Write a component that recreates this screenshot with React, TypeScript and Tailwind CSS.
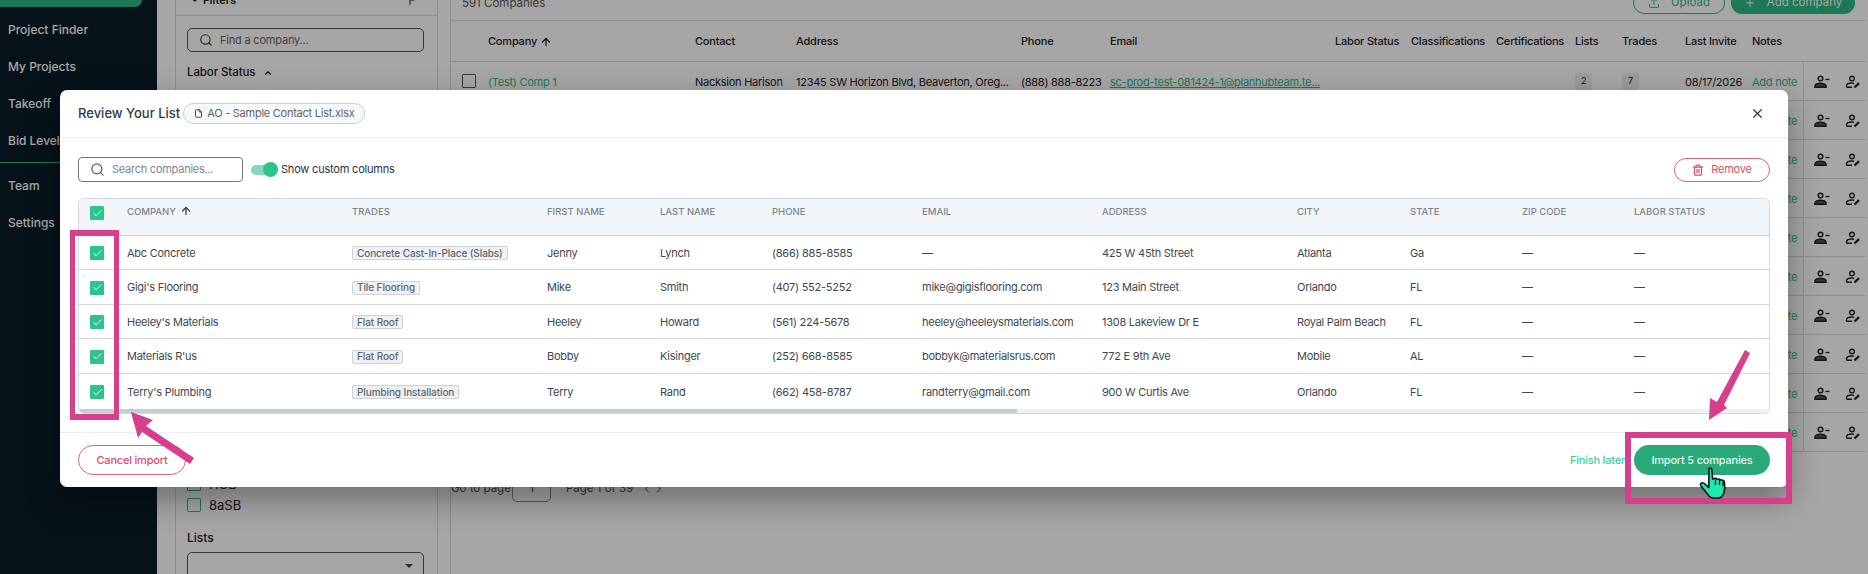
import React from 'react';
import { ArrowUp, Check, ChevronLeft, ChevronRight, ChevronUp, File, Plus, Search, Trash2, Upload, X } from 'lucide-react';

const navItems = ['Project Finder', 'My Projects', 'Takeoff', 'Bid Leveling'];

const bgCols = 'grid grid-cols-[37px_207px_101px_225px_89px_225px_76px_85px_79px_47px_63px_67px_51px_1fr]';
const bgHead = ['', 'Company', 'Contact', 'Address', 'Phone', 'Email', 'Labor Status', 'Classifications', 'Certifications', 'Lists', 'Trades', 'Last Invite', 'Notes'];

const cols = 'grid grid-cols-[48px_225px_195px_113px_112px_150px_180px_195px_113px_112px_112px_1fr]';
const heads = ['Trades', 'First Name', 'Last Name', 'Phone', 'Email', 'Address', 'City', 'State', 'Zip Code', 'Labor Status'];

const rows = [
  { h: 'h-[34px]', company: 'Abc Concrete', trade: 'Concrete Cast-In-Place (Slabs)', first: 'Jenny', last: 'Lynch', phone: '(866) 885-8585', email: '—', address: '425 W 45th Street', city: 'Atlanta', state: 'Ga' },
  { h: 'h-[35px]', company: "Gigi's Flooring", trade: 'Tile Flooring', first: 'Mike', last: 'Smith', phone: '(407) 552-5252', email: 'mike@gigisflooring.com', address: '123 Main Street', city: 'Orlando', state: 'FL' },
  { h: 'h-[34px]', company: "Heeley's Materials", trade: 'Flat Roof', first: 'Heeley', last: 'Howard', phone: '(561) 224-5678', email: 'heeley@heeleysmaterials.com', address: '1308 Lakeview Dr E', city: 'Royal Palm Beach', state: 'FL' },
  { h: 'h-[35px]', company: "Materials R'us", trade: 'Flat Roof', first: 'Bobby', last: 'Kisinger', phone: '(252) 668-8585', email: 'bobbyk@materialsrus.com', address: '772 E 9th Ave', city: 'Mobile', state: 'AL' },
  { h: 'h-[35px]', company: "Terry's Plumbing", trade: 'Plumbing Installation', first: 'Terry', last: 'Rand', phone: '(662) 458-8787', email: 'randterry@gmail.com', address: '900 W Curtis Ave', city: 'Orlando', state: 'FL' },
];

const CheckBox = () => (
  <div className="w-[14px] h-[14px] rounded-[1px] bg-[#2cc48c] flex items-center justify-center">
    <Check className="w-[11px] h-[11px] text-white" strokeWidth={2} />
  </div>
);

const PersonMinus = () => (
  <svg width="16" height="14" viewBox="0 0 16 14" fill="none" stroke="#222222" className="shrink-0">
    <circle cx="6.5" cy="3.5" r="2.3" strokeWidth="1.5" />
    <path d="M1 12.2v-1c0-1.8 2.8-3 5.5-3s5.5 1.2 5.5 3v1Z" strokeWidth="1.6" fill="#555555" />
    <path d="M11.5 4.5h4" strokeWidth="1.3" />
  </svg>
);

const PersonPen = () => (
  <svg width="16" height="14" viewBox="0 0 16 14" fill="none" stroke="#222222" className="shrink-0">
    <circle cx="7" cy="3.5" r="2.3" strokeWidth="1.4" />
    <path d="M1.5 12.3v-1.2c0-1.8 2.6-3 5.5-3 .8 0 1.500.1 2.200.3M1.500 12.300h5.500" strokeWidth="1.5" />
    <path d="M9.500 12.500l4.500-4.300" strokeWidth="2.4" />
  </svg>
);

const Background = () => (
  <div className="flex h-[574px] bg-white text-[#222222]">
    <aside className="w-[157px] shrink-0 bg-[#0a1c28] text-white text-[12px] font-medium">
      <div className="w-[142px] h-[7px] bg-[#2fb985] rounded-br-[14px]" />
      <div className="pl-2 pt-[14px] flex flex-col gap-[20px]">
        {navItems.map(n => <div key={n} className="h-[17px] leading-[17px]">{n}</div>)}
      </div>
      <div className="h-px bg-[#2fb985] mt-[13px]" />
      <div className="pl-2 pt-[14px] flex flex-col gap-[20px]">
        <div className="h-[17px] leading-[17px]">Team</div>
        <div className="h-[17px] leading-[17px]">Settings</div>
      </div>
    </aside>

    <section className="w-[263px] ml-[18px] shrink-0 border-x border-[#dcdcdc] h-full">
      <div className="h-[16px] border-b border-[#dcdcdc] flex items-end justify-between pl-[16px] pr-[20px] overflow-hidden">
        <span className="text-[11px] font-semibold leading-[16px] translate-y-[-7px]">•&nbsp;&nbsp;Filters</span>
        <ChevronLeft className="w-3 h-3 translate-y-[-8px] rotate-45" />
      </div>
      <div className="pl-[11px] pr-[13px] pt-[12px]">
        <div className="h-[24px] border border-[#555555] rounded-[5px] flex items-center gap-[7px] pl-[11px] text-[11px] tracking-[-0.2px] text-[#666666]">
          <Search className="w-[14px] h-[14px] text-[#444444]" />
          Find a company...
        </div>
        <div className="mt-[12px] flex items-center gap-[8px] text-[11.5px] tracking-[-0.1px] font-medium">
          Labor Status
          <ChevronUp className="w-[10px] h-[10px]" strokeWidth={3} />
        </div>
        <div className="mt-[396px] flex items-center gap-[8px] text-[13px] h-[14px]">
          <div className="w-[14px] h-[14px] border border-[#2fb985] rounded-[1px]" />
          HUB
        </div>
        <div className="mt-[7px] flex items-center gap-[8px] text-[13px] h-[14px]">
          <div className="w-[14px] h-[14px] border border-[#2fb985] rounded-[1px]" />
          8aSB
        </div>
        <div className="mt-[18px] text-[12px] font-medium leading-[16px]">Lists</div>
        <div className="mt-[6px] h-[30px] border border-[#555555] rounded-[5px] flex items-center justify-end pr-[10px]">
          <svg width="8" height="4" viewBox="0 0 8 4" className="mt-[-2px]"><polygon points="0,0 8,0 4,4" fill="#444444" /></svg>
        </div>
      </div>
    </section>

    <section className="ml-[12px] flex-1 border-l border-[#dcdcdc] min-w-0">
      <div className="h-[20px] flex items-end justify-between pl-[11px] pr-[13px]">
        <span className="text-[11.5px] text-[#555555] leading-[14px] mb-[10px]">591 Companies</span>
        <div className="flex gap-[6px] h-[22px] mb-[6px]">
          <div className="w-[92px] h-[22px] border border-[#2fb985] rounded-full flex items-center justify-center gap-[11px] text-[11.5px] text-[#2fb985]">
            <Upload className="w-[12px] h-[12px]" /> Upload
          </div>
          <div className="w-[124px] h-[22px] bg-[#2fb985] rounded-full flex items-center justify-center gap-[11px] text-[11.5px] text-white">
            <Plus className="w-[12px] h-[12px]" /> Add company
          </div>
        </div>
      </div>
      <div className={`${bgCols} h-[42px] items-center border-y border-[#dcdcdc] text-[11px] tracking-[-0.2px] font-medium mr-[2px] pt-[1px]`}>
        {bgHead.map((h, i) => (
          <div key={i} className="flex items-center gap-[3px] whitespace-nowrap">
            {h}
            {h === 'Company' && <ArrowUp className="w-[12px] h-[12px]" strokeWidth={2.5} />}
          </div>
        ))}
      </div>
      {Array.from({ length: 10 }).map((_, i) => (
        <div key={i} className={`${bgCols} h-[39px] items-center border-b border-[#dcdcdc] text-[11px] tracking-[-0.25px] mr-[2px]`}>
          {i === 0 ? (
            <>
              <div className="pl-[11px]"><div className="w-[14px] h-[14px] border border-[#555555] rounded-[1px]" /></div>
              <div className="text-[#2fb985] pt-[3px]">(Test) Comp 1</div>
              <div className="whitespace-nowrap pt-[3px]">Nacksion Harison</div>
              <div className="whitespace-nowrap pt-[3px]">12345 SW Horizon Blvd, Beaverton, Oreg...</div>
              <div className="whitespace-nowrap pt-[3px]">(888) 888-8223</div>
              <div className="whitespace-nowrap text-[#2fb985] underline pt-[3px]">sc-prod-test-081424-1@planhubteam.te...</div>
              <div /><div /><div />
              <div><span className="inline-flex w-[17px] h-[17px] items-center justify-center rounded-[2px] bg-[#eeeeee] text-[9px]">2</span></div>
              <div><span className="inline-flex w-[17px] h-[17px] items-center justify-center rounded-[2px] bg-[#eeeeee] text-[9px]">7</span></div>
              <div className="whitespace-nowrap pt-[3px]">08/17/2026</div>
            </>
          ) : (
            <div className="col-span-12" />
          )}
          <div className="whitespace-nowrap text-[#2fb985] pt-[3px]">Add note</div>
          <div className="h-full border-l border-[#dcdcdc] flex items-center gap-[15px] pl-[10px] pt-[2px]">
            <PersonMinus />
            <PersonPen />
          </div>
        </div>
      ))}
      <div className="mt-[24px] flex items-center text-[11.5px] text-[#555555] h-[26px]">
        <span className="w-[61px] whitespace-nowrap">Go to page</span>
        <div className="w-[39px] h-[26px] border border-[#888888] rounded-[5px] flex items-center justify-center">1</div>
        <span className="ml-[15px] whitespace-nowrap">Page 1 of 39</span>
        <ChevronLeft className="w-3 h-3 ml-2" />
        <ChevronRight className="w-3 h-3" />
      </div>
    </section>
  </div>
);

const Modal = () => (
  <div className="absolute left-[60px] top-[90px] w-[1728px] h-[397px] bg-white rounded-[7px] shadow-[0_12px_32px_rgba(0,0,0,0.35)] flex flex-col">
    <div className="h-[48px] shrink-0 border-b border-[#eceef0] flex items-center pl-[18px] pr-[23px]">
      <span className="text-[13px] font-medium text-[#333b42]">Review Your List</span>
      <div className="ml-[3px] h-[21px] px-[10px] border border-[#c8ced4] bg-[#f7f9fa] rounded-full flex items-center gap-[4px] text-[11px] tracking-[-0.25px] text-[#5d6770]">
        <File className="w-[9px] h-[9px] text-[#333b42]" strokeWidth={2.5} />
        AO - Sample Contact List.xlsx
      </div>
      <X className="w-[15px] h-[15px] ml-auto text-[#333b42]" />
    </div>

    <div className="flex items-center h-[25px] mt-[19px] px-[18px] shrink-0">
      <div className="w-[165px] h-[25px] border border-[#70777d] rounded-[4px] flex items-center gap-[7px] pl-[11px] text-[11px] tracking-[-0.25px] text-[#7d868e]">
        <Search className="w-[15px] h-[15px] text-[#5d6770]" />
        Search companies...
      </div>
      <div className="relative ml-[8px] w-[27px] h-[10px] rounded-full bg-[#83d8bf]">
        <div className="absolute right-0 -top-[2.5px] w-[15px] h-[15px] rounded-full bg-[#2cc48c]" />
      </div>
      <span className="ml-[3px] text-[11px] tracking-[-0.2px] text-[#2b333a]">Show custom columns</span>
      <button className="ml-auto w-[96px] h-[24px] border border-[#d9647c] rounded-full flex items-center justify-center gap-[7px] text-[11px] tracking-[-0.2px] text-[#d9506a]">
        <Trash2 className="w-[12px] h-[12px]" strokeWidth={2.5} />
        Remove
      </button>
    </div>

    <div className="mx-[18px] mt-[16px] h-[216px] shrink-0 border border-[#d3d9df] rounded-[6px] overflow-hidden">
      <div className={`${cols} h-[37px] border-b border-[#c9d0d7] bg-[#f3f6f8] pt-[7px] text-[9.5px] font-medium uppercase text-[#7b858e]`}>
        <div className="pl-[11px]"><CheckBox /></div>
        <div className="flex items-start gap-[4px] -mt-[1px]">Company <ArrowUp className="w-[12px] h-[12px] text-[#333b42]" strokeWidth={2.5} /></div>
        {heads.map(h => <div key={h} className="-mt-[1px]">{h}</div>)}
      </div>
      {rows.map((r, i) => (
        <div key={r.company} className={`${cols} ${r.h} items-center pt-[1px] ${i < 4 ? 'border-b border-[#d3d9df]' : ''} text-[11px] tracking-[-0.25px] text-[#3f474e]`}>
          <div className="pl-[11px]"><CheckBox /></div>
          <div className="whitespace-nowrap">{r.company}</div>
          <div>
            <span className="inline-flex h-[14px] items-center px-[4px] border border-[#cdd2d9] bg-[#eff1f4] rounded-[2px] text-[10px] tracking-[-0.1px] font-medium text-[#5d6770] whitespace-nowrap">{r.trade}</span>
          </div>
          <div>{r.first}</div>
          <div>{r.last}</div>
          <div>{r.phone}</div>
          <div className="whitespace-nowrap">{r.email}</div>
          <div className="whitespace-nowrap">{r.address}</div>
          <div className="whitespace-nowrap">{r.city}</div>
          <div>{r.state}</div>
          <div>—</div>
          <div>—</div>
        </div>
      ))}
      <div className="h-[4px] bg-[#eef1f4]">
        <div className="w-[938px] h-full bg-[#c5ced6] rounded-r-[1px]" />
      </div>
    </div>

    <div className="mt-[18px] h-[55px] shrink-0 border-t border-[#eceef0] flex items-center px-[18px]">
      <button className="w-[108px] h-[30px] border border-[#d9647c] rounded-full text-[11px] tracking-[-0.2px] font-medium text-[#d9506a]">Cancel import</button>
      <span className="ml-auto text-[11px] tracking-[-0.2px] font-medium text-[#3ccf9c]">Finish later</span>
      <button className="ml-[9px] w-[136px] h-[30px] bg-[#2aa97a] rounded-full text-[11px] tracking-[-0.2px] font-medium text-[#e4f7ef]">Import 5 companies</button>
    </div>
  </div>
);

// call-outs drawn on top of the screenshot
const Callouts = () => (
  <>
    <div className="absolute left-[70px] top-[230px] w-[49px] h-[190px] border-[5px] border-t-[6px] border-b-[6px] border-[#d63f8e]" />
    <div className="absolute left-[1625px] top-[432px] w-[167px] h-[72px] border-[6px] border-[#d63f8e]" />
    <svg className="absolute left-[125px] top-[405px]" width="75" height="65" viewBox="0 0 75 65">
      <polygon points="6,7 28,15 21,21 69,53 65,59 17,27 13,33" fill="#d63f8e" />
    </svg>
    <svg className="absolute left-[1700px] top-[345px]" width="55" height="80" viewBox="0 0 55 80">
      <polygon points="9,75 10,53 17,57 45,5 50,8 24,60 27,63" fill="#d63f8e" />
    </svg>
    <svg className="absolute left-[1699px] top-[466px]" width="30" height="34" viewBox="0 0 30 34">
      <path d="M10 2.5c1.2-1 2.6-.4 2.8 1l.8 9.5 2.6-.6c.6-.2 1.4 0 1.6.8l2-.2c.8-.1 1.4.3 1.6 1l1.8 0c1.2 0 2 .8 2.2 2 .5 4 .5 8-.6 11-.8 2.6-2.4 4.6-4.8 5H13c-2.4-.6-4-3-5.5-5.2L2 20c-.8-1.2-.6-2.6.4-3 1.4-.6 3 .4 4 1.4l3.4 3.2Z" fill="#1de9b0" stroke="#101010" strokeWidth="1.6" strokeLinejoin="round" />
      <path d="M16.5 14v5M20.5 14v5M24 15v5" stroke="#101010" strokeWidth="1.3" fill="none" />
    </svg>
  </>
);

const App: React.FC = () => (
  <div className="relative w-[1868px] h-[574px] overflow-hidden" style={{ fontFamily: 'Inter, "Liberation Sans", sans-serif' }}>
    <Background />
    <div className="absolute inset-0 bg-black/35" />
    <Modal />
    <Callouts />
  </div>
);

export default App;
